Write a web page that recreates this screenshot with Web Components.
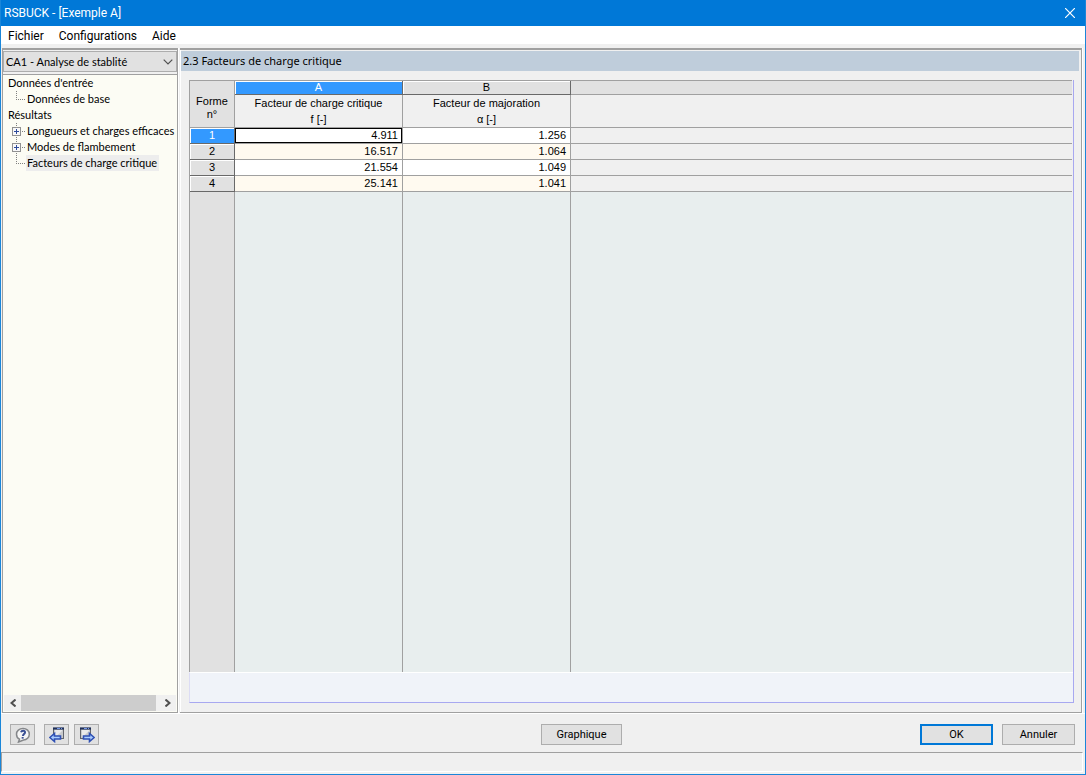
<!DOCTYPE html>
<html lang="fr">
<head>
<meta charset="utf-8">
<title>RSBUCK - [Exemple A]</title>
<style>
html, body { height: 100%; margin: 0; }
body { font: 11px/16px Roboto, "Liberation Sans", sans-serif; color: #000; background: #f0f0f0; }
</style>
</head>
<body>
<app-window caption="RSBUCK - [Exemple A]">
  <menu-bar slot="menu" items="Fichier,Configurations,Aide"></menu-bar>
  <nav-panel slot="side">
    <case-picker slot="top"></case-picker>
    <tree-item>Données d'entrée
      <tree-item slot="children" child last>Données de base</tree-item>
    </tree-item>
    <tree-item>Résultats
      <tree-item slot="children" child closed>Longueurs et charges efficaces</tree-item>
      <tree-item slot="children" child closed>Modes de flambement</tree-item>
      <tree-item slot="children" child last selected>Facteurs de charge critique</tree-item>
    </tree-item>
  </nav-panel>
  <content-panel slot="main" heading="2.3 Facteurs de charge critique">
    <factor-grid></factor-grid>
  </content-panel>
  <action-bar slot="actions">
    <push-button slot="left" label="Aide" icon="help"></push-button>
    <push-button slot="left" label="Précédent" icon="prev" class="after"></push-button>
    <push-button slot="left" label="Suivant" icon="next"></push-button>
    <push-button slot="center" size="wide">Graphique</push-button>
    <push-button slot="right" primary>OK</push-button>
    <push-button slot="right">Annuler</push-button>
  </action-bar>
</app-window>

<script>
class Base extends HTMLElement {
  connectedCallback() {
    if (this.shadowRoot) return;
    this.attachShadow({ mode: 'open' }).innerHTML =
      `<style>*{box-sizing:border-box}${this.css()}</style>${this.html()}`;
  }
}

customElements.define('app-window', class extends Base {
  css() { return `
    :host { display:flex; flex-direction:column; box-sizing:border-box; height:100vh; border:1px solid #1a86d9; border-top:0; background:#f0f0f0; }
    header { flex:none; display:flex; align-items:center; justify-content:space-between; height:26px; padding-left:3px; background:#0078d7; color:#fff; }
    h1 { margin:0; font:12px/16px Roboto,"Liberation Sans",sans-serif; }
    button { width:30px; height:26px; padding:0; border:0; background:none; display:grid; place-items:center; }
    main { flex:1; min-height:0; display:flex; gap:2px; padding:4px 3px 0 1px; border-bottom:1px solid #fff; }
    ::slotted([slot=side]) { flex:none; }
    ::slotted([slot=main]) { flex:1; min-width:0; }
    footer { flex:none; height:20px; margin:0 2px 2px 0; border:1px solid #a0a0a0; border-right-color:#fff; border-bottom-color:#fff; }`; }
  html() { return `
    <header><h1>${this.getAttribute('caption')}</h1>
      <button aria-label="Fermer"><svg width="10" height="10" viewBox="0 0 10 10"><path d="M0 0L10 10M10 0L0 10" stroke="#fff" stroke-width="1.2"/></svg></button></header>
    <slot name="menu"></slot>
    <main><slot name="side"></slot><slot name="main"></slot></main>
    <slot name="actions"></slot>
    <footer></footer>`; }
});

customElements.define('menu-bar', class extends Base {
  css() { return `
    :host { display:block; flex:none; background:#fff; }
    nav { display:flex; gap:15px; height:18px; padding:1px 0 0 7px; font:12px/18px Roboto,"Liberation Sans",sans-serif; }
    button { height:18px; padding:0; border:0; background:none; font:inherit; color:#000; }`; }
  html() { return `<nav>${this.getAttribute('items').split(',').map(t => `<button>${t}</button>`).join('')}</nav>`; }
});

customElements.define('nav-panel', class extends Base {
  css() { return `
    :host { display:flex; flex-direction:column; box-sizing:border-box; width:176px; border:1px solid #a0a0a0; border-top-width:2px; background:#fcfcf4; box-shadow:1px 0 #fff; padding-bottom:1px; }
    .tree { flex:1; min-height:0; overflow:hidden; padding-left:5px; white-space:nowrap; font-family:Lato,"Liberation Sans",sans-serif; }
    .scroll { flex:none; display:flex; align-items:center; justify-content:space-between; height:16px; margin:0 1px; background:#f0f0f0; }
    .scroll button { width:17px; height:16px; border:0; padding:0; background:none; display:grid; place-items:center; }
    .thumb { flex:1; height:16px; margin-right:3px; background:#cdcdcd; }
    path { fill:none; stroke:#505050; stroke-width:2; }`; }
  html() { return `
    <slot name="top"></slot>
    <div class="tree" role="tree"><slot></slot></div>
    <div class="scroll">
      <button aria-label="Défiler à gauche"><svg width="6" height="8"><path d="M5.5 .5L1.5 4L5.5 7.5"/></svg></button>
      <div class="thumb"></div>
      <button aria-label="Défiler à droite"><svg width="6" height="8"><path d="M.5 .5L4.5 4L.5 7.5"/></svg></button>
    </div>`; }
});

customElements.define('case-picker', class extends Base {
  css() { return `
    :host { display:block; flex:none; padding-top:1px; background:#f0f0f0; border-bottom:1px solid #a0a0a0; }
    label { display:grid; align-items:center; margin-bottom:2px; }
    select { grid-area:1/1; appearance:none; width:100%; height:21px; margin:0; padding:0 20px 0 2px; border:1px solid #adadad; border-radius:0; background:#e1e1e1; color:#000; font:11px/16px Lato,"Liberation Sans",sans-serif; }
    svg { grid-area:1/1; justify-self:end; margin-right:4px; pointer-events:none; }`; }
  html() { return `<label><select aria-label="Cas"><option>CA1 - Analyse de stablité</option></select>
    <svg width="10" height="6"><path d="M.7 .7L5 5L9.3 .7" fill="none" stroke="#505050" stroke-width="1.2"/></svg></label>`; }
});

customElements.define('tree-item', class extends Base {
  css() { return `
    :host { display:block; line-height:16px; }
    .row { display:flex; height:16px; }
    .text { flex:none; height:16px; }
    :host([child]) .text { padding:0 2px 0 1px; }
    :host([selected]) .text { background:#ededed; }
    .branch { display:none; flex:none; width:14px; margin-left:4px; }
    :host([child]) .branch { display:block; }`; }
  html() {
    const last = this.hasAttribute('last'), closed = this.hasAttribute('closed');
    return `<div class="row" role="treeitem">
      <svg class="branch" width="14" height="16" shape-rendering="crispEdges">
        <path d="M4.5 0V${last ? 9 : 16}M4 8.5H14" fill="none" stroke="#808080" stroke-dasharray="1 1"/>
        ${closed ? '<rect x=".5" y="4.5" width="8" height="8" fill="#f8f8f8" stroke="#919191"/><path d="M2 8.5H7M4.5 6V11" stroke="#2d4a9a"/>' : ''}
      </svg><span class="text"><slot></slot></span></div><slot name="children"></slot>`;
  }
});

customElements.define('content-panel', class extends Base {
  css() { return `
    :host { display:flex; flex-direction:column; box-sizing:border-box; padding:1px 2px 0 1px; border:1px solid #a0a0a0; border-top-width:2px; border-left:0; box-shadow:1px 0 #fff, inset 1px 0 #fff; }
    h2 { flex:none; margin:0; height:20px; padding-left:2px; background:#bfcddb; font:11px/20px "Noto Sans","Liberation Sans",sans-serif; }
    .body { flex:1; min-height:0; display:grid; padding:9px 5px 9px 8px; }`; }
  html() { return `<h2>${this.getAttribute('heading')}</h2><div class="body"><slot></slot></div>`; }
});

customElements.define('factor-grid', class extends Base {
  css() { return `
    :host { display:grid; grid-template-rows:minmax(0,1fr) 31px; min-height:0; border-right:1px solid #a8a8f0; }
    .sheet { display:flex; flex-direction:column; min-height:0; border:1px solid #a0a0a0; border-width:1px 0 0 1px; margin-right:1px; }
    table { flex:none; width:100%; table-layout:fixed; border-spacing:0; font:11px/16px "Liberation Sans",sans-serif; }
    th, td { padding:0; font-weight:normal; border-right:1px solid #a0a0a0; border-bottom:1px solid #a0a0a0; overflow:hidden; white-space:nowrap; }
    th:last-child, td:last-child { border-right:0; }
    .letters th { height:14px; line-height:13px; background:#e1e1e1; box-shadow:inset 1px 1px #fff; border-color:#696969; }
    .letters th:last-child { box-shadow:none; border-color:#a0a0a0; }
    .letters .corner { box-shadow:none; border-color:#a0a0a0; padding-top:8px; }
    .letters .on, .data .on { background:#3399ff; color:#fff; }
    .titles th { height:33px; background:#f0f0f0; vertical-align:top; }
    .data th, .data td { height:16px; line-height:15px; }
    .data th { background:#e1e1e1; box-shadow:inset 1px 1px #fff; border-color:#696969; }
    .data td { background:#fff; text-align:right; padding-right:4px; }
    .data tr:nth-child(even) td { background:#fffaf0; }
    .data tr td:last-child { background:#f0f0f0 !important; }
    .data .current { box-shadow:inset 0 0 0 1px #000; }
    .rest { flex:1; display:grid; grid-template-columns:45px 168px 168px 1fr; background:#e8eeee; }
    .rest i { border-right:1px solid #a0a0a0; }
    .rest i:first-child { background:#e1e1e1; }
    .note { border-top:1px solid #fff; border-bottom:1px solid #a8a8f0; border-left:1px solid #dcdcf4; background:#f0f3f9; }`; }
  html() {
    const rows = [['4.911', '1.256'], ['16.517', '1.064'], ['21.554', '1.049'], ['25.141', '1.041']];
    return `<div class="sheet"><table>
      <colgroup><col style="width:45px"><col style="width:168px"><col style="width:168px"><col></colgroup>
      <thead>
        <tr class="letters"><th class="corner" rowspan="2">Forme<br>n°</th><th class="on">A</th><th>B</th><th></th></tr>
        <tr class="titles"><th>Facteur de charge critique<br>f [-]</th><th>Facteur de majoration<br>α [-]</th><th></th></tr>
      </thead>
      <tbody class="data">${rows.map((r, i) => `<tr><th${i ? '' : ' class="on"'}>${i + 1}</th><td${i ? '' : ' class="current"'}>${r[0]}</td><td>${r[1]}</td><td></td></tr>`).join('')}</tbody>
    </table><div class="rest"><i></i><i></i><i></i></div></div><div class="note"></div>`;
  }
});

customElements.define('action-bar', class extends Base {
  css() { return `
    :host { display:grid; grid-template-columns:531fr auto 453fr; flex:none; align-items:start; height:38px; box-sizing:border-box; padding:10px 10px 0 9px; }
    div { display:flex; gap:5px; }
    .right { justify-content:flex-end; gap:9px; }
    ::slotted(.after) { margin-left:4px; }`; }
  html() { return `<div><slot name="left"></slot></div><div><slot name="center"></slot></div><div class="right"><slot name="right"></slot></div>`; }
});

const windowIcon = `<rect x="4.5" y="1.5" width="10" height="10" fill="#c9cacd" stroke="#62656c"/><path d="M6 10.500L13 4V3H6Z" fill="#e9e9ea"/><path d="M4 1.500H15" stroke="#1f2f58" stroke-width="2.200"/><path d="M8 1.500H11M12 1.500H13" stroke="#7397ea"/>`;
const icons = {
  help: `<path d="M8 1.500C11.700 1.500 14.300 4 14.300 7.200S11.700 13 8.500 13L3.500 15L4.500 12.200C2.500 11.200 1.500 9.400 1.500 7.200C1.500 4 4.300 1.500 8 1.500Z" fill="#f6f6f6" stroke="#85878a" stroke-width="1.500"/><path d="M6 5.300C6.600 3.300 10.400 3.300 10 5.500C9.800 7 8.100 7.200 7.900 9M7.700 10L7.500 11.600" fill="none" stroke="#3a5094" stroke-width="2"/>`,
  prev: windowIcon + `<path d="M.8 10.500L5.500 6.500V9H11.500V12H5.500V14.500Z" fill="#a9ccff" stroke="#2f50b4" stroke-width="1.600"/>`,
  next: `<g transform="translate(-3 0)">${windowIcon}</g><path d="M15.200 10.500L10.500 6.500V9H4.500V12H10.500V14.500Z" fill="#a9ccff" stroke="#2f50b4" stroke-width="1.600"/>`
};
customElements.define('push-button', class extends Base {
  css() { return `
    :host { display:block; }
    button { display:grid; place-items:center; width:73px; height:21px; padding:0; border:1px solid #adadad; background:#e1e1e1; color:#000; font:11px/16px Roboto,"Liberation Sans",sans-serif; }
    :host([size=wide]) button { width:81px; }
    :host([icon]) button { width:25px; }
    :host([primary]) button { border:2px solid #0078d7; }`; }
  html() {
    const i = this.getAttribute('icon');
    return i ? `<button aria-label="${this.getAttribute('label')}"><svg width="16" height="16" viewBox="0 0 16 16">${icons[i]}</svg></button>` : `<button><slot></slot></button>`;
  }
});
</script>
</body>
</html>
